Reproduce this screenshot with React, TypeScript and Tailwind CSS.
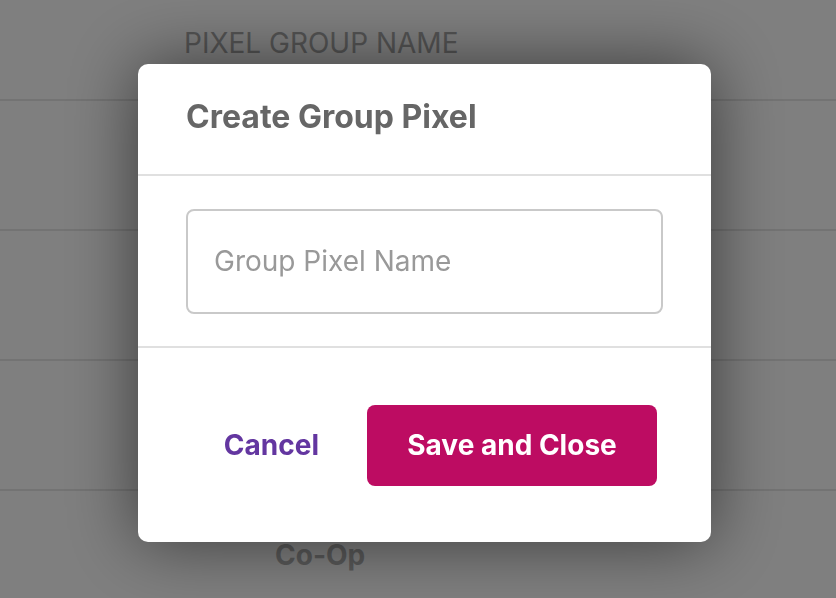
const rows = ["", "", "", "Co-Op"];

export default function App() {
  return (
    <div className="relative h-[598px] w-[836px] overflow-hidden bg-white font-['Inter','Liberation_Sans',sans-serif]">
      {/* page behind the dialog */}
      <div className="h-[101px] border-b-2 border-[#e6e6e6] pl-[184px] pt-[25px]">
        <span className="text-[28px] leading-[36px] font-normal uppercase text-[#a9a9a9]">Pixel Group Name</span>
      </div>
      {rows.map((name, i) => (
        <div key={i} className="flex h-[130px] items-center border-b-2 border-[#e6e6e6] pl-[275px]">
          <span className="text-[28px] font-bold text-[#b3b3b3]">{name}</span>
        </div>
      ))}

      {/* overlay */}
      <div className="fixed inset-0 flex items-center justify-center bg-black/50 pl-[13px] pt-[8px]">
        <div className="flex h-[478px] w-[573px] flex-col rounded-[10px] bg-white shadow-[0_0_70px_rgba(0,0,0,0.55)]">
          <div className="flex h-[112px] items-center border-b-2 border-[#e0e0e0] px-12 pb-[4px]">
            <h3 className="text-[32px] font-bold text-[#666666]">Create Group Pixel</h3>
          </div>
          <div className="flex h-[172px] items-center border-b-2 border-[#e0e0e0] px-12">
            <input
              type="text"
              placeholder="Group Pixel Name"
              className="h-[105px] w-full rounded-[8px] border-2 border-[#c9c9c9] px-[26px] text-[28px] text-[#444] outline-none placeholder:text-[#999999]"
            />
          </div>
          <div className="flex flex-1 items-center justify-end gap-12 pr-[54px]">
            <button type="button" className="text-[28px] font-bold text-[#6336a0]">
              Cancel
            </button>
            <button
              type="button"
              className="h-[81px] w-[290px] rounded-[8px] bg-[#bd0c62] text-[28px] font-bold text-white"
            >
              Save and Close
            </button>
          </div>
        </div>
      </div>
    </div>
  );
}
